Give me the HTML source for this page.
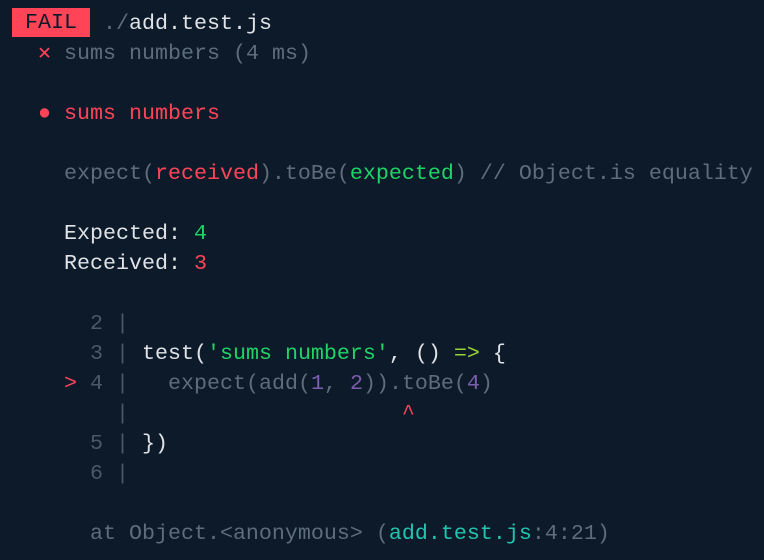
<!DOCTYPE html><html><head><style>
body{margin:0;background:#0c1a29;width:764px;height:560px;overflow:hidden}
pre{margin:0;position:absolute;left:12px;top:9px;font-family:"Liberation Mono",monospace;font-size:21.67px;line-height:30px;color:#dfe3e7}
.d{color:#5e6d79}.r{color:#ff4458}.g{color:#1fd466}.p{color:#7b5fae}.t{color:#22c4b0}.y{color:#9ad33a}.n{color:#4b5966}
.f{background:#ff4458;color:#0c1a29;display:inline-block;line-height:29px;margin-top:-1px;vertical-align:top}
</style></head><body><pre><span class="f"> FAIL </span> <span class="d">./</span>add.test.js
  <span class="r">✕</span> <span class="d">sums numbers (4 ms)</span>

  <span class="r">● sums numbers</span>

    <span class="d">expect(</span><span class="r">received</span><span class="d">).toBe(</span><span class="g">expected</span><span class="d">) // Object.is equality</span>

    Expected: <span class="g">4</span>
    Received: <span class="r">3</span>

      <span class="n">2 |</span>
      <span class="n">3 |</span> test(<span class="g">'sums numbers'</span>, () <span class="y">=&gt;</span> {
    <span class="r">&gt;</span> <span class="n">4 |</span>   <span class="d">expect(add(</span><span class="p">1</span><span class="d">, </span><span class="p">2</span><span class="d">)).toBe(</span><span class="p">4</span><span class="d">)</span>
        <span class="n">|</span>                     <span class="r">^</span>
      <span class="n">5 |</span> })
      <span class="n">6 |</span>

      <span class="d">at Object.&lt;anonymous&gt; (</span><span class="t">add.test.js</span><span class="d">:4:21)</span></pre></body></html>
